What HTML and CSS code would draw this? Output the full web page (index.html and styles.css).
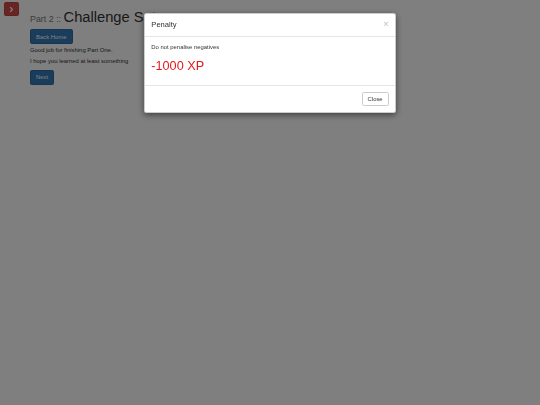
FILE: index.html
```html
<!DOCTYPE html>
<html lang="en">
<head>
<meta charset="utf-8">
<title>Challenge Set</title>
<link rel="stylesheet" href="styles.css">
</head>
<body>
<div class="page">
  <button class="toggle" type="button" aria-label="Toggle menu">
    <svg viewBox="0 0 10 10" width="7" height="7"><path d="M3.6 2.2 L6.4 5 L3.6 7.8" fill="none" stroke="#fff" stroke-width="1.7" stroke-linecap="round" stroke-linejoin="round"/></svg>
  </button>
  <main class="main">
    <h1 class="title"><small class="title-part">Part 2 :: </small>Challenge Set</h1>
    <div class="row-btn"><a class="btn btn-primary">Back Home</a></div>
    <p class="line first">Good job for finishing Part One.</p>
    <p class="line">I hope you learned at least something</p>
    <div class="row-btn next-row"><a class="btn btn-primary">Next</a></div>
  </main>
</div>

<div class="backdrop"></div>
<div class="modal">
  <div class="modal-dialog">
    <div class="modal-content">
      <div class="modal-header">
        <h4 class="modal-title">Penalty</h4>
        <button class="close" type="button">&times;</button>
      </div>
      <div class="modal-body">
        <p class="modal-text">Do not penalise negatives</p>
        <h2 class="penalty">-1000 XP</h2>
      </div>
      <div class="modal-footer">
        <button class="btn btn-default" type="button">Close</button>
      </div>
    </div>
  </div>
</div>
</body>
</html>
```
FILE: styles.css
```css
* { box-sizing: border-box; }

html, body { height: 100%; }

body {
  margin: 0;
  font-family: "Liberation Sans", Arial, Helvetica, sans-serif;
  font-size: 5.9px;
  line-height: 8.44px;
  color: #333;
  background: #fff;
}

.page {
  display: flex;
  align-items: flex-start;
  padding-left: 4px;
}

.toggle {
  margin-top: 2px;
  width: 15px;
  height: 14px;
  padding: 0;
  border: 1px solid #c9403c;
  border-radius: 1.7px;
  background: #cf4a47;
  display: flex;
  align-items: center;
  justify-content: center;
}

.main {
  margin-left: 11px;
  padding-top: 9px;
}

.title {
  margin: 0 0 4.22px;
  font-size: 14.7px;
  line-height: 16.2px;
  font-weight: 400;
  color: #333;
}

.title-part {
  font-size: 8.9px;
  line-height: 8px;
  color: #777;
}

.row-btn { line-height: 0; }

.btn {
  display: inline-block;
  padding: 2.2px 5.06px;
  font-family: inherit;
  font-size: 5.9px;
  line-height: 8.44px;
  border: 1px solid transparent;
  border-radius: 1.7px;
  white-space: nowrap;
  cursor: pointer;
}

.btn-primary {
  color: #fff;
  background: #337ab7;
  border-color: #2e6da4;
}

.btn-default {
  color: #333;
  background: #fff;
  border-color: #ccc;
}

.line {
  margin: 0;
}

.line.first { margin-top: 1.4px; }
.line + .line { margin-top: 2.8px; }

.next-row { margin-top: 4.4px; }

.backdrop {
  position: fixed;
  inset: 0;
  background: rgba(0, 0, 0, 0.5);
}

.modal {
  position: fixed;
  inset: 0;
}

.modal-dialog {
  width: 252px;
  margin: 12.66px auto;
}

.modal-content {
  background: #fff;
  border: 1px solid rgba(0, 0, 0, 0.2);
  border-radius: 2.5px;
  box-shadow: 0 2px 6px rgba(0, 0, 0, 0.5);
}

.modal-header {
  display: flex;
  align-items: flex-start;
  justify-content: space-between;
  padding: 6.4px 6.33px 5.2px;
  border-bottom: 1px solid #e5e5e5;
}

.modal-title {
  margin: 0;
  font-size: 7.6px;
  line-height: 10.85px;
  font-weight: 400;
  color: #333;
}

.close {
  padding: 0;
  margin: 0;
  border: 0;
  background: transparent;
  font-family: inherit;
  font-size: 8.86px;
  line-height: 8.86px;
  font-weight: 700;
  color: #000;
  opacity: 0.2;
}

.modal-body {
  padding: 6.33px;
}

.modal-text {
  margin: 0 0 4.22px;
}

.penalty {
  margin: 8px 0 5px;
  font-size: 12.66px;
  line-height: 13.9px;
  font-weight: 400;
  color: #e4191c;
}

.modal-footer {
  padding: 5.6px 6.33px 5.4px;
  text-align: right;
  border-top: 1px solid #e5e5e5;
  line-height: 0;
}
```
